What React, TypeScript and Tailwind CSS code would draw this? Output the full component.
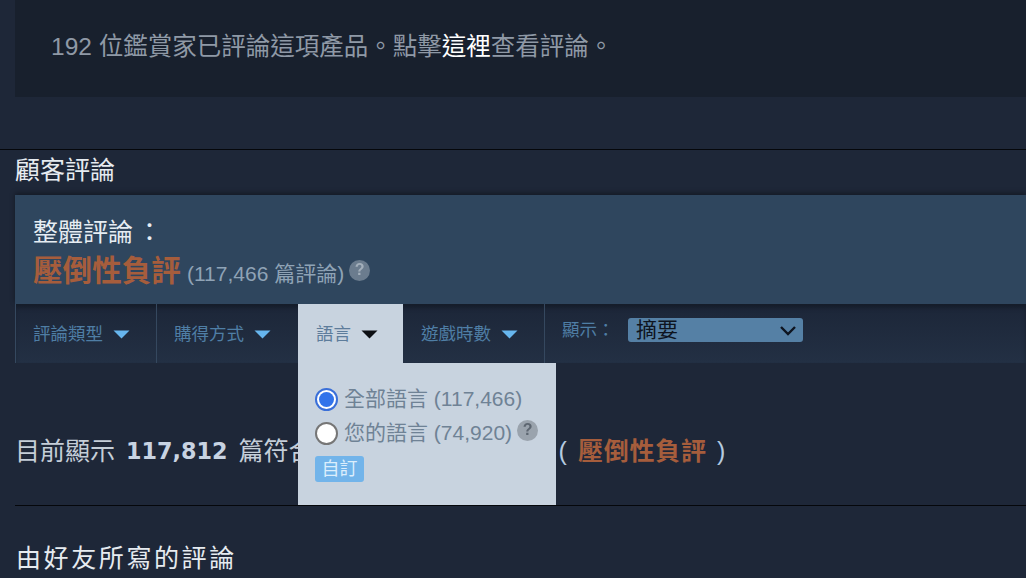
const FONT = "font-['Liberation_Sans','Noto_Sans_CJK_TC',sans-serif]"

function Caret({ dark }: { dark?: boolean }) {
  return (
    <svg width="17" height="9" viewBox="0 0 17 9" className="shrink-0" aria-hidden="true">
      <path d="M0.5 0.5 H16.5 L8.5 8.5 Z" fill={dark ? '#0d0f14' : '#67b6ee'} />
    </svg>
  )
}

function Help({ className }: { className: string }) {
  return (
    <span
      className={`flex size-[21px] shrink-0 items-center justify-center rounded-full text-[16px] leading-none font-bold blur-[0.4px] ${className}`}
    >
      ?
    </span>
  )
}

function FilterTab({ label, width, inset = 'pl-[17px]', border = true }: { label: string; width: string; inset?: string; border?: boolean }) {
  return (
    <div className={`h-[59px] ${width}`}>
      <div className={`flex h-[59px] w-full items-center gap-[10px] pt-[2px] ${inset} ${border ? 'border-l border-[#35485f]' : ''}`}>
        <span className="text-[17.5px] text-[#4f7ea5]">{label}</span>
        <Caret />
      </div>
    </div>
  )
}

export default function App() {
  return (
    <div className={`h-[578px] w-[1026px] overflow-hidden bg-[#1e2738] ${FONT}`}>
      <div className="ml-[15px] flex h-[97px] items-center bg-[#18202d] pb-[3px] pl-[36px] text-[24.5px] text-[#8f99a6]">
        <span>
          192 位鑑賞家已評論這項產品。點擊<span className="text-white">這裡</span>查看評論。
        </span>
      </div>

      <div className="mt-[52px] border-t border-[#05070b] pl-[15px]">
        <h2 className="flex h-[45px] items-center pb-[4px] text-[25px] leading-none font-normal text-[#e6ebf0]">顧客評論</h2>

        <div className="relative">
          <div className="h-[109px] bg-[#2f465e] pt-[21px] pl-[18px] shadow-[0_-2px_5px_rgba(0,0,0,0.35)]">
            <div className="text-[25px] leading-[32px] text-[#e6edf3]">
              整體評論<span className="ml-[4px]">：</span>
            </div>
            <div className="mt-[6px] flex items-center">
              <span className="text-[29.6px] leading-[34px] font-bold text-[#a65d3c]">壓倒性負評</span>
              <span className="mt-[6px] ml-[6px] text-[21px] leading-[24px] text-[#8fa3b6]">(117,466 篇評論)</span>
              <Help className="mt-[-2px] ml-[5px] bg-[#6b7c8e] text-[#a3afbb]" />
            </div>
          </div>

          <div className="flex h-[59px] items-start bg-gradient-to-b from-[#1c2638] to-[#233044] shadow-[inset_0_4px_4px_rgba(0,0,0,0.25)]">
            <FilterTab label="評論類型" width="w-[141px]" />
            <FilterTab label="購得方式" width="w-[142px]" />
            <div className="flex h-[59px] w-[105px] items-center gap-[10px] bg-[#c8d3df] pt-[2px] pl-[18px]">
              <span className="text-[17.5px] text-[#5d7c9b]">語言</span>
              <Caret dark />
            </div>
            <FilterTab label="遊戲時數" width="w-[141px]" inset="pl-[18px]" border={false} />
            <div className="flex h-[59px] items-center border-l border-[#35485f] pb-[7px] pl-[17px]">
              <span className="w-[66px] text-[17.5px] text-[#4f7ea5]">顯示：</span>
              <div className="flex h-[24px] w-[175px] items-center justify-between rounded-[3px] bg-[#5580a5] pr-[6px] pl-[8px] text-[21px] text-[#0e1420]">
                <span>摘要</span>
                <svg width="18" height="11" viewBox="0 0 18 11" aria-hidden="true">
                  <path d="M2 2 L9 9 L16 2" fill="none" stroke="#0e1420" strokeWidth="2.4" />
                </svg>
              </div>
            </div>
          </div>

          <div className="absolute top-[168px] left-[283px] z-10 h-[142px] w-[258px] bg-[#c8d3df] pt-[24px] pl-[17px]">
            <label className="flex h-[24px] items-center gap-[6px]">
              <span className="flex size-[23px] items-center justify-center rounded-full border-2 border-[#3a6fd8] bg-white">
                <span className="size-[15px] rounded-full bg-[#3273ea]" />
              </span>
              <span className="text-[21px] text-[#6f8295]">全部語言 (117,466)</span>
            </label>
            <label className="mt-[10px] flex h-[24px] items-center gap-[6px]">
              <span className="size-[23px] rounded-full border-2 border-[#767676] bg-white" />
              <span className="text-[21px] text-[#6f8295]">您的語言 (74,920)</span>
              <Help className="mt-[-6px] ml-[-1px] bg-[#9aa3ad] text-[#5d6671]" />
            </label>
            <div className="mt-[11px] flex h-[26px] w-[49px] items-center justify-center rounded-[3px] bg-[#72b4ea] text-[18px] text-[#dceefc]">
              自訂
            </div>
          </div>
        </div>

        <div className="mt-[74px] flex h-[30px] items-center text-[25px] text-[#c5ced8]">
          <span>目前顯示</span>
          <span className="mx-[11px] font-['DejaVu_Sans'] text-[22.3px] font-bold text-[#c8d3e2]">117,812</span>
          <span className="w-[320px]">篇符合</span>
          <span className="text-[#b5cbe0]">(</span>
          <span className="ml-[11px] tracking-[0.8px] font-bold text-[#a65d3c]">壓倒性負評</span>
          <span className="ml-[10px] text-[#b5cbe0]">)</span>
        </div>

        <div className="mt-[38px] border-t border-[#05070b] pt-[36px] text-[25px] leading-[32px] tracking-[2.6px] text-[#e6ebf0]">
          <span className="ml-px">由好友所寫的評論</span>
        </div>
      </div>
    </div>
  )
}
